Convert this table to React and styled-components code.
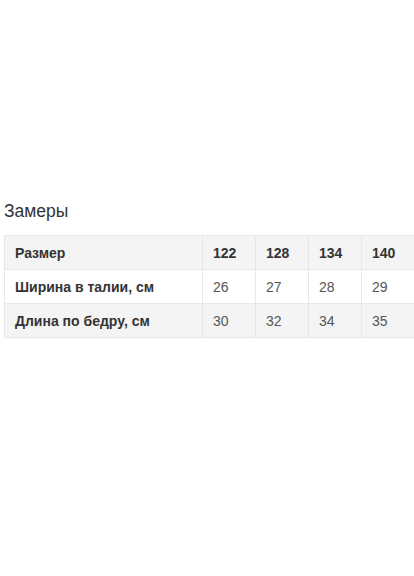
import React from "react";
import styled, { createGlobalStyle } from "styled-components";

const GlobalStyle = createGlobalStyle`
  html, body {
    margin: 0;
    padding: 0;
    background: #fff;
    font-family: "Liberation Sans", Arial, sans-serif;
  }
`;

const Wrapper = styled.div`
  width: 414px;
  height: 576px;
  padding: 200px 0 0 4px;
  box-sizing: border-box;
  overflow: hidden;
`;

const Title = styled.h3`
  margin: 0 0 13px 0;
  font-size: 17.5px;
  font-weight: 400;
  color: #333;
  line-height: 22px;
`;

const Table = styled.table`
  border-collapse: collapse;
  width: 420px;
  table-layout: fixed;
  font-size: 14px;

  tr:nth-child(odd) {
    background-color: #f4f4f4;
  }
`;

const Col = styled.col`
  width: ${(p) => p.$w}px;
`;

const Cell = styled.td`
  height: 33px;
  padding: 0 10px;
  border: 1px solid #e8e8e8;
  color: ${(p) => (p.$bold ? "#333" : "#555")};
  font-weight: ${(p) => (p.$bold ? 700 : 400)};
  white-space: nowrap;
  overflow: hidden;
`;

const sizes = ["122", "128", "134", "140"];
const rows = [
  { label: "Ширина в талии, см", values: ["26", "27", "28", "29"] },
  { label: "Длина по бедру, см", values: ["30", "32", "34", "35"] },
];

const App = () => {
  return (
    <Wrapper>
      <GlobalStyle />
      <Title>Замеры</Title>
      <Table>
        <colgroup>
          <Col $w={198} />
          <Col $w={53} />
          <Col $w={53} />
          <Col $w={53} />
          <Col $w={63} />
        </colgroup>
        <tbody>
          <tr>
            <Cell $bold>Размер</Cell>
            {sizes.map((s) => (
              <Cell $bold key={s}>{s}</Cell>
            ))}
          </tr>
          {rows.map((r) => (
            <tr key={r.label}>
              <Cell $bold>{r.label}</Cell>
              {r.values.map((v, i) => (
                <Cell key={i}>{v}</Cell>
              ))}
            </tr>
          ))}
        </tbody>
      </Table>
    </Wrapper>
  );
};

export default App;
